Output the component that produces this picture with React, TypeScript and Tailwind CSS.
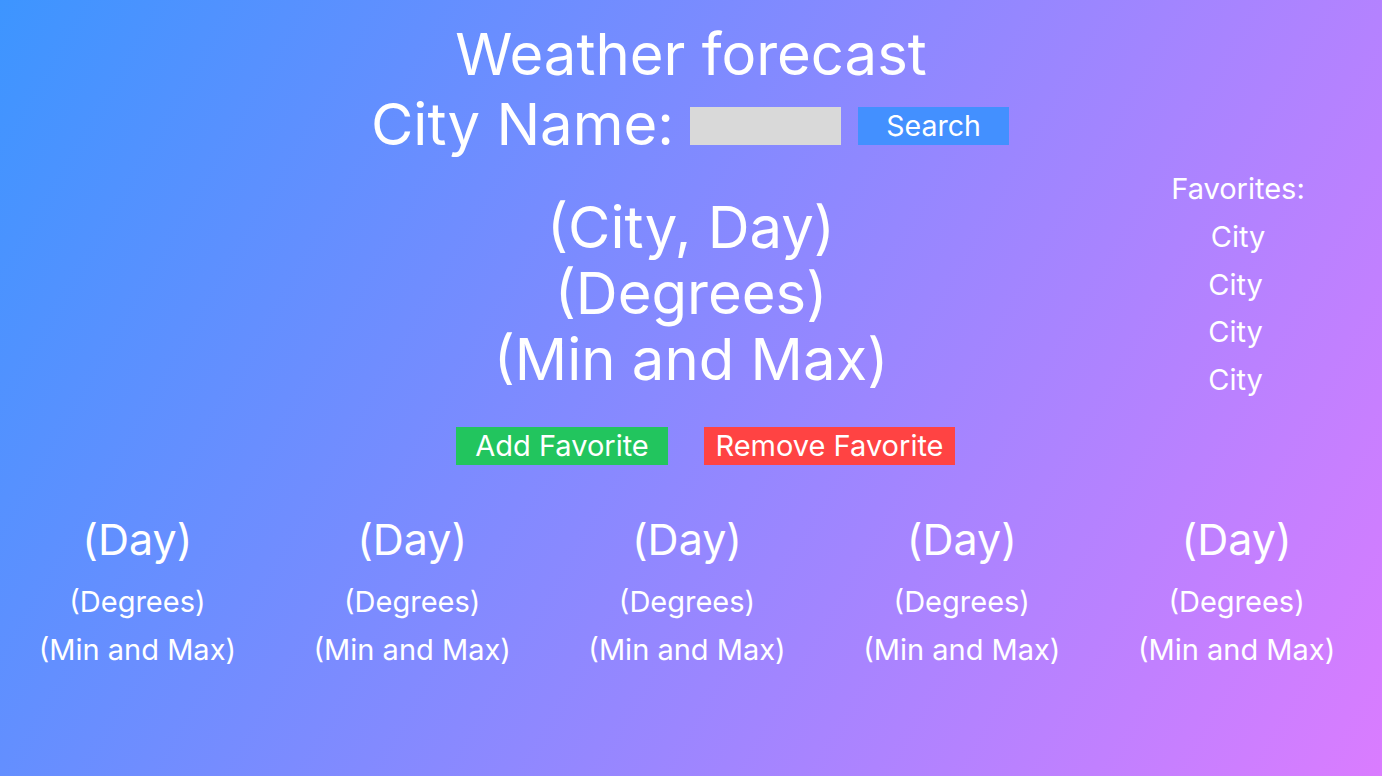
const font = { fontFamily: "Inter, 'Noto Sans', sans-serif" };

const days = [0, 1, 2, 3, 4];
const favorites = ["City", "City", "City", "City"];

export default function App() {
  return (
    <div
      className="w-[1382px] h-[776px] overflow-hidden bg-[linear-gradient(120deg,#3d95ff,#da7cff)] text-white"
      style={font}
    >
      <div className="flex flex-col items-center pt-[22px]">
        <h1 className="text-[58px] leading-[64px] font-normal">Weather forecast</h1>
        <div className="flex items-center mt-[2px] h-[72px] -ml-[2px]">
          <span className="text-[58px] leading-[72px] mr-[16px]">City Name:</span>
          <input className="w-[151px] h-[38px] bg-[#d9d9d9] outline-none mt-[4px]" />
          <button className="w-[151px] h-[38px] bg-[#4390ff] ml-[17px] mt-[4px] text-[28.5px] leading-[38px]">
            Search
          </button>
        </div>
      </div>

      <div className="grid grid-cols-[410px_562px_410px] mt-[34px]">
        <div />
        <div className="flex flex-col items-center">
          <div className="text-[58px] leading-[66px]">(City, Day)</div>
          <div className="text-[58px] leading-[66px]">(Degrees)</div>
          <div className="text-[58px] leading-[66px]">(Min and Max)</div>
          <div className="flex gap-[36px] mt-[35px] ml-[29px]">
            <button className="w-[212px] h-[38px] bg-[#22c55e] text-[29px] leading-[38px]">
              Add Favorite
            </button>
            <button className="w-[251px] h-[38px] bg-[#ff4343] text-[29px] leading-[38px]">
              Remove Favorite
            </button>
          </div>
        </div>
        <div className="flex flex-col items-center pl-[122px] -mt-[29px]">
          <div className="text-[29px] leading-[48px]">Favorites:</div>
          {favorites.map((c, i) => (
            <div key={i} className={`text-[29px] leading-[47.7px] ${i === 0 ? "" : "-ml-[5px]"}`}>
              {c}
            </div>
          ))}
        </div>
      </div>

      <div className="grid grid-cols-5 w-[1374px] mt-[46px]">
        {days.map((d) => (
          <div key={d} className="flex flex-col items-center">
            <div className="text-[43px] leading-[56px]">(Day)</div>
            <div className="text-[29px] leading-[48px] mt-[11px]">(Degrees)</div>
            <div className="text-[29px] leading-[48px]">(Min and Max)</div>
          </div>
        ))}
      </div>
    </div>
  );
}
